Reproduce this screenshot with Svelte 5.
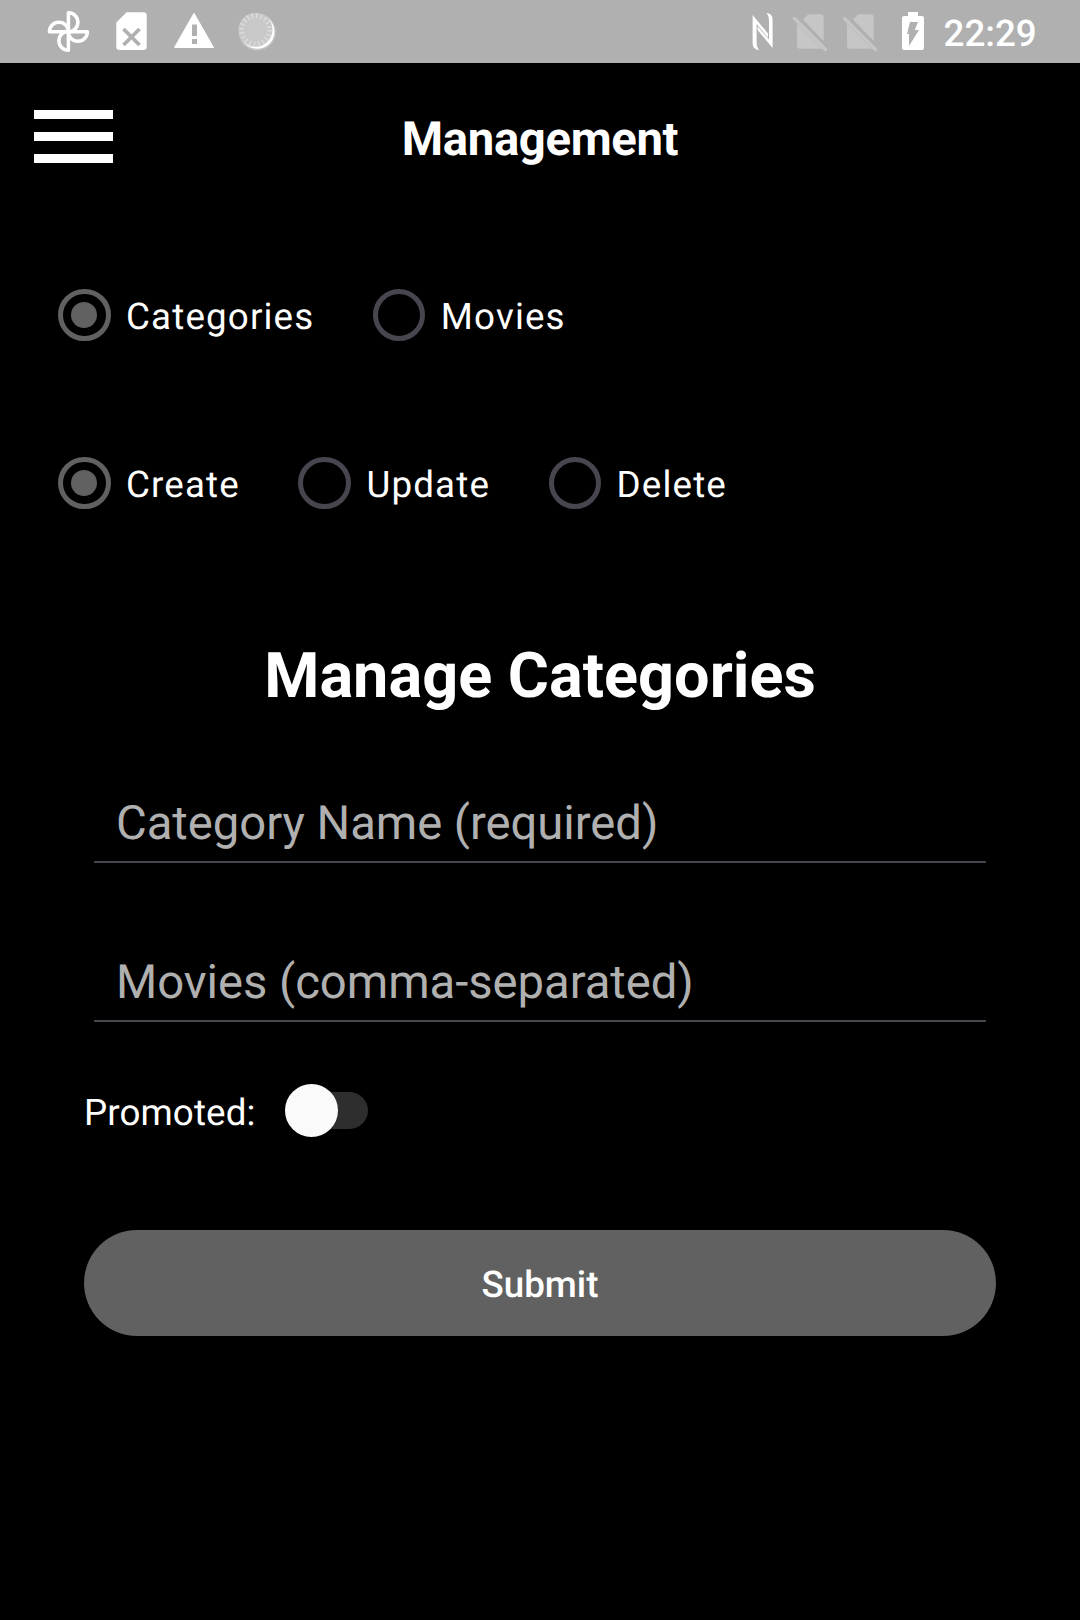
<script>
  const targets = ['Categories', 'Movies'];
  const actions = ['Create', 'Update', 'Delete'];
  const fields = ['Category Name (required)', 'Movies (comma-separated)'];
  let target = $state('Categories');
  let action = $state('Create');
</script>

{#snippet radios(items, current, pick)}
  <div class="radios" role="radiogroup">
    {#each items as item}
      <button class="radio" role="radio" aria-checked={item === current} onclick={() => pick(item)}>
        <span class="ring" class:on={item === current}></span>
        <span class="label">{item}</span>
      </button>
    {/each}
  </div>
{/snippet}

<div class="screen">
  <div class="status">
    <svg width="240" height="63" viewBox="40 0 240 63">
      <g fill="none" stroke="#fff" stroke-width="3.5" stroke-linejoin="round">
        <path d="M68.4 31.8V12.8a9.5 9.5 0 0 1 0 19z" />
        <path d="M68.4 31.8H87.4a9.5 9.5 0 0 1-19 0z" />
        <path d="M68.4 31.8V50.3a9.5 9.5 0 0 1 0-19z" />
        <path d="M68.4 31.8H49.4a9.5 9.5 0 0 1 19 0z" />
      </g>
      <path fill="#fff" d="M126.5 12.3H143.5a3.2 3.2 0 0 1 3.2 3.2V46.8a3.2 3.2 0 0 1-3.2 3.2H119.5a3.2 3.2 0 0 1-3.2-3.2V22.5z" />
      <path d="M123.5 29l16 16M139.5 29l-16 16" stroke="#b0b0b0" stroke-width="3.8" />
      <path fill="#fff" stroke="#fff" stroke-width="1" stroke-linejoin="round" d="M194 13.3L213.5 47.5H174.5z" />
      <path fill="#b0b0b0" d="M192 24.5h5v11.5h-5zM192 39h5v5h-5z" />
      <circle cx="257.3" cy="32" r="18.5" fill="#c4c4c4" />
      <circle cx="257.3" cy="31.6" r="17.2" fill="#fff" />
      <circle cx="255.5" cy="29.8" r="17" fill="#c8c8c8" />
      <circle cx="255.5" cy="29.8" r="14" fill="none" stroke="#dadada" stroke-width="5" stroke-dasharray="1.7 2.7" />
    </svg>
    <svg class="right" width="190" height="63" viewBox="745 0 190 63">
      <g fill="#fff">
        <path d="M752.6 15L768 33.5V37.5L756.6 24V42Q756.6 48 759.5 50Q752.6 50 752.6 43z" />
        <path d="M772.6 48L757.6 30V26.300L769 39.500V21Q769 15 766 13Q772.6 13 772.6 20z" />
      </g>
      {#each [0, 50] as dx}
        <g transform="translate({dx} 0)">
          <path fill="#c6c6c6" d="M803 19.5L807.5 15Q808.3 14.3 809.5 14.3H820.5Q823.7 14.3 823.7 17.5V41zM797 23.7L822 48.7H800Q797 48.7 797 45.7z" />
          <path d="M794.5 18.5L825.5 49.5" stroke="#c6c6c6" stroke-width="3.4" stroke-linecap="round" />
        </g>
      {/each}
      <path fill="#fff" d="M908 12h10v4h4q2 0 2 2v30q0 2-2 2h-18q-2 0-2-2V18q0-2 2-2h4z" />
      <path fill="#b0b0b0" d="M910 22h8l-3.3 8h4.3l-10 16v-12h-2z" />
    </svg>
    <span class="clock">22:29</span>
  </div>

  <header>
    <button class="menu" aria-label="Menu"><i></i><i></i><i></i></button>
    <h1>Management</h1>
  </header>

  {@render radios(targets, target, (v) => (target = v))}
  {@render radios(actions, action, (v) => (action = v))}

  <h2>Manage Categories</h2>

  <form onsubmit={(e) => e.preventDefault()}>
    {#each fields as field}
      <input type="text" placeholder={field} />
    {/each}
    <div class="promoted">
      <span>Promoted:</span>
      <span class="track"><span class="thumb"></span></span>
    </div>
    <button class="submit">Submit</button>
  </form>
</div>

<style>
  :global(body) { background: #000; }
  .screen {
    width: 1080px;
    height: 1620px;
    overflow: hidden;
    box-sizing: border-box;
    background: #000;
    color: #fff;
    font: 400 36.75px/44px Roboto, sans-serif;
    text-rendering: geometricPrecision;
  }
  button { border: 0; padding: 0; background: none; color: inherit; font: inherit; text-rendering: inherit; }
  .status { display: flex; height: 63px; padding-left: 40px; background: #b0b0b0; }
  .right { margin-left: 465px; }
  .clock { margin-left: 8.5px; padding-top: 12px; font-weight: 500; }
  header {
    display: grid;
    grid-template-columns: 113px 1fr 113px;
    align-items: center;
    height: 152px;
  }
  .menu {
    display: flex;
    flex-direction: column;
    gap: 13px;
    width: 79px;
    margin: 0 0 5px 34px;
  }
  .menu i { height: 9px; background: #fff; }
  h1 {
    margin: 0;
    text-align: center;
    font-size: 47.25px;
    line-height: 56px;
    font-weight: 700;
    letter-spacing: -0.35px;
  }
  .radios {
    display: flex;
    align-items: center;
    gap: 58.5px;
    height: 84px;
    margin-top: 58px;
    padding-left: 58px;
  }
  .radios + .radios { margin-top: 84px; }
  .radio { display: flex; align-items: center; gap: 15.5px; letter-spacing: 1.15px; }
  .ring {
    display: grid;
    place-items: center;
    box-sizing: border-box;
    width: 52.5px;
    height: 52.5px;
    border: 5.25px solid #49454f;
    border-radius: 50%;
  }
  .ring.on { border-color: #616161; }
  .ring.on::after { content: ''; width: 26.25px; height: 26.25px; border-radius: 50%; background: #616161; }
  .label { padding-top: 3px; }
  h2 {
    margin: 114px 0 0;
    text-align: center;
    font-size: 63px;
    line-height: 76px;
    font-weight: 700;
  }
  form { display: flex; flex-direction: column; padding: 0 84px; }
  input {
    box-sizing: border-box;
    height: 79px;
    margin: 69px 10px 0;
    padding: 1px 22px 0;
    border: 0;
    border-bottom: 2px solid #49454f;
    background: none;
    color: #fff;
    font: 400 47.25px/56px Roboto, sans-serif;
    letter-spacing: -0.05px;
    text-rendering: inherit;
    outline: 0;
  }
  input + input { margin-top: 80px; }
  input::placeholder { color: #b0b0b0; opacity: 1; }
  .promoted { display: flex; align-items: center; height: 53px; margin-top: 62px; }
  .promoted > span:first-child { padding-top: 4px; letter-spacing: 0.1px; }
  .track {
    display: flex;
    align-items: center;
    width: 83px;
    height: 37px;
    margin-left: 30px;
    border-radius: 19px;
    background: #2e2e2e;
  }
  .thumb { flex: none; width: 53px; height: 53px; border-radius: 50%; background: #fafafa; }
  .submit {
    height: 106px;
    margin-top: 93px;
    padding-top: 3px;
    border-radius: 53px;
    background: #616161;
    font-weight: 500;
  }
</style>
